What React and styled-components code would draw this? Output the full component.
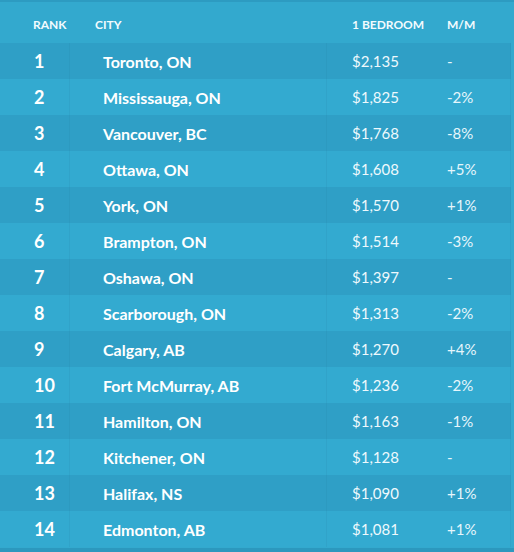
import React from "react";
import styled, { createGlobalStyle } from "styled-components";

const GlobalStyle = createGlobalStyle`
  html, body {
    margin: 0;
    padding: 0;
    background: #2f9fc6;
  }
  body {
    font-family: "Lato", "Open Sans", sans-serif;
    color: #ffffff;
  }
`;

const Board = styled.div`
  width: 514px;
  height: 552px;
  background: #33a9ce;
  border-top: 2px solid #2d9bc1;
  border-bottom: 4px solid #2c98be;
  box-sizing: border-box;
`;

const Grid = styled.div`
  display: grid;
  grid-template-columns: 70px 257px 110px 74px;
`;

const HeadRow = styled.div`
  display: contents;
`;

const HeadCell = styled.div`
  height: 41px;
  display: flex;
  align-items: center;
  padding-left: ${(p) => p.$pad}px;
  padding-top: 4px;
  box-sizing: border-box;
  font-size: 12px;
  font-weight: 700;
  color: #f2fbfe;
`;

const Row = styled.div`
  display: contents;
`;

const Cell = styled.div`
  height: 36px;
  display: flex;
  align-items: center;
  box-sizing: border-box;
  padding-left: ${(p) => p.$pad}px;
  background: ${(p) => (p.$odd ? "#2f9fc6" : "#33aad0")};
  border-right: 1px solid
    ${(p) => (p.$line ? (p.$odd ? "#2d9ac0" : "#31a3c9") : "transparent")};
`;

const Rank = styled(Cell)`
  font-size: 18px;
  font-weight: 700;
`;

const City = styled(Cell)`
  font-size: 16px;
  font-weight: 700;
`;

const Price = styled(Cell)`
  font-size: 15px;
  font-weight: 400;
  color: #eef9fd;
`;

const Change = styled(Cell)`
  font-size: 15px;
  font-weight: 400;
  color: #e6f6fc;
`;

const rows = [
  [1, "Toronto, ON", "$2,135", "-"],
  [2, "Mississauga, ON", "$1,825", "-2%"],
  [3, "Vancouver, BC", "$1,768", "-8%"],
  [4, "Ottawa, ON", "$1,608", "+5%"],
  [5, "York, ON", "$1,570", "+1%"],
  [6, "Brampton, ON", "$1,514", "-3%"],
  [7, "Oshawa, ON", "$1,397", "-"],
  [8, "Scarborough, ON", "$1,313", "-2%"],
  [9, "Calgary, AB", "$1,270", "+4%"],
  [10, "Fort McMurray, AB", "$1,236", "-2%"],
  [11, "Hamilton, ON", "$1,163", "-1%"],
  [12, "Kitchener, ON", "$1,128", "-"],
  [13, "Halifax, NS", "$1,090", "+1%"],
  [14, "Edmonton, AB", "$1,081", "+1%"],
];

export default function App() {
  return (
    <>
      <GlobalStyle />
      <Board>
        <Grid>
          <HeadRow>
            <HeadCell $pad={33}>RANK</HeadCell>
            <HeadCell $pad={25}>CITY</HeadCell>
            <HeadCell $pad={25}>1 BEDROOM</HeadCell>
            <HeadCell $pad={10}>M/M</HeadCell>
          </HeadRow>
          {rows.map(([rank, city, price, mm]) => {
            const odd = rank % 2 === 1;
            return (
              <Row key={rank}>
                <Rank $odd={odd} $line $pad={34}>{rank}</Rank>
                <City $odd={odd} $line $pad={33}>{city}</City>
                <Price $odd={odd} $pad={25}>{price}</Price>
                <Change $odd={odd} $line $pad={10}>{mm}</Change>
              </Row>
            );
          })}
        </Grid>
      </Board>
    </>
  );
}
